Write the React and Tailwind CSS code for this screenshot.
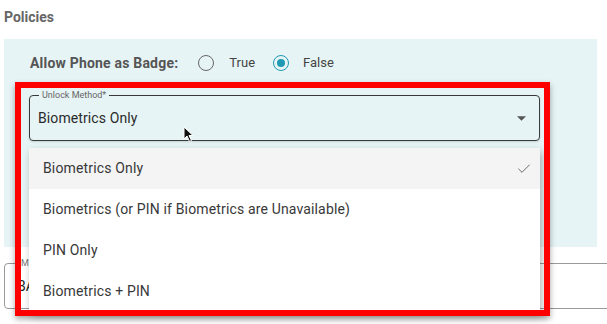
import { Check } from 'lucide-react';

const options = [
    'Biometrics Only',
    'Biometrics (or PIN if Biometrics are Unavailable)',
    'PIN Only',
    'Biometrics + PIN',
];

const Radio = ({ checked }) => (
    <span
        className={`flex h-[16px] w-[16px] items-center justify-center rounded-full border-[1.5px] ${
            checked ? 'border-[#1f9ab3]' : 'border-[#666]'
        }`}
    >
        {checked && <span className="h-[8px] w-[8px] rounded-full bg-[#1f9ab3]"></span>}
    </span>
);

export default function App() {
    return (
        <div className="relative h-[324px] w-[607px] overflow-hidden bg-white font-['Roboto',sans-serif]">
            <div className="pl-[4px] pt-[9px] text-[14px] font-bold leading-[16px] text-[#666]">Policies</div>

            {/* policies panel */}
            <div className="ml-[4px] mt-[14px] h-[208px] w-[593px] bg-[#e7f4f5] pt-[15px]">
                <div className="flex h-[18px] items-center pl-[26px] text-[13px]">
                    <span className="text-[14px] font-bold tracking-[0.2px] text-[#555]">Allow Phone as Badge:</span>
                    <span className="ml-[20px]">
                        <Radio />
                    </span>
                    <span className="ml-[15px] text-[#444]">True</span>
                    <span className="ml-[18px]">
                        <Radio checked />
                    </span>
                    <span className="ml-[14px] text-[#444]">False</span>
                </div>

                <div className="relative ml-[25px] mt-[23px] w-[511px]">
                    <div className="relative flex h-[46px] items-center justify-between rounded-[4px] border border-[#3a3a3a] pl-[8px] pr-[13px] shadow-[0_1px_2px_rgba(0,0,0,0.15)]">
                        <span className="absolute -top-[7px] left-[9px] bg-[#e7f4f5] px-[3px] text-[9px] leading-[12px] text-[#666]">
                            Unlock Method*
                        </span>
                        <span className="text-[14px] tracking-[0.1px] text-[#2a2a2a]">Biometrics Only</span>
                        <svg width="9" height="5" viewBox="0 0 10 5">
                            <path d="M0 0 L10 0 L5 5 Z" fill="#555" />
                        </svg>
                    </div>

                    {/* open menu */}
                    <div className="absolute left-0 top-[53px] z-10 w-[511px] bg-white shadow-[2px_4px_8px_rgba(0,0,0,0.3)]">
                        {options.map((opt, i) => (
                            <div
                                key={opt}
                                className={`flex h-[41px] items-center justify-between pl-[14px] pr-[8px] text-[14px] tracking-[0.15px] text-[#383838] ${
                                    i === 0 ? 'bg-[#f4f4f4]' : ''
                                }`}
                            >
                                <span>{opt}</span>
                                {i === 0 && <Check size={16} strokeWidth={1.3} className="text-[#555]" />}
                            </div>
                        ))}
                    </div>
                </div>
            </div>

            {/* field below the panel, mostly covered */}
            <div className="relative ml-[4px] mt-[16px] flex h-[46px] w-[620px] items-center rounded-[4px] border border-[#9a9a9a] pl-[12px]">
                <span className="absolute -top-[7px] left-[12px] bg-white px-[4px] text-[9px] leading-[12px] text-[#777]">
                    Min
                </span>
                <span className="text-[14px] text-[#222]">BA</span>
            </div>

            {/* red highlight annotation */}
            <div className="pointer-events-none absolute left-[15px] top-[82px] z-20 h-[234px] w-[535px] border-[6px] border-[#ff0000] shadow-[0_3px_6px_rgba(0,0,0,0.35)]"></div>

            {/* mouse cursor */}
            <svg className="absolute left-[183px] top-[126px] z-30" width="12" height="17" viewBox="0 0 12 17">
                <path d="M1 1 L1 13 L4 10 L6.5 15.5 L8.5 14.5 L6 9.5 L10 9.5 Z" fill="#111" stroke="#fff" strokeWidth="1" />
            </svg>
        </div>
    );
}
